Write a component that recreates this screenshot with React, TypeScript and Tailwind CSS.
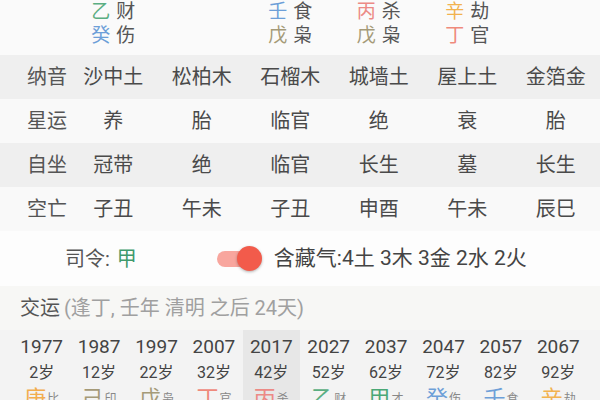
import React from 'react'

const FONT = "font-['Roboto','Noto_Sans_CJK_SC',sans-serif]"

const stemColor: Record<string, string> = {
  甲: 'text-[#4aa876]',
  乙: 'text-[#5aae82]',
  丙: 'text-[#ec8a86]',
  丁: 'text-[#ef8a7c]',
  戊: 'text-[#a59a78]',
  己: 'text-[#a59a78]',
  庚: 'text-[#f2ad4e]',
  辛: 'text-[#f2b24e]',
  壬: 'text-[#6d9fd8]',
  癸: 'text-[#6d9fd8]',
}

type Pair = [string, string] | null

const hiddenRow1: Pair[] = [['乙', '财'], null, ['壬', '食'], ['丙', '杀'], ['辛', '劫'], null]
const hiddenRow2: Pair[] = [['癸', '伤'], null, ['戊', '枭'], ['戊', '枭'], ['丁', '官'], null]

const rows = [
  { label: '纳音', cells: ['沙中土', '松柏木', '石榴木', '城墙土', '屋上土', '金箔金'], bg: 'bg-[#efefef]' },
  { label: '星运', cells: ['养', '胎', '临官', '绝', '衰', '胎'], bg: 'bg-[#f9f9f9]' },
  { label: '自坐', cells: ['冠带', '绝', '临官', '长生', '墓', '长生'], bg: 'bg-[#efefef]' },
  { label: '空亡', cells: ['子丑', '午未', '子丑', '申酉', '午未', '辰巳'], bg: 'bg-[#f9f9f9]' },
]

const luck = [
  { year: 1977, age: 2, stem: '庚', god: '比' },
  { year: 1987, age: 12, stem: '己', god: '印' },
  { year: 1997, age: 22, stem: '戊', god: '枭' },
  { year: 2007, age: 32, stem: '丁', god: '官' },
  { year: 2017, age: 42, stem: '丙', god: '杀' },
  { year: 2027, age: 52, stem: '乙', god: '财' },
  { year: 2037, age: 62, stem: '甲', god: '才' },
  { year: 2047, age: 72, stem: '癸', god: '伤' },
  { year: 2057, age: 82, stem: '壬', god: '食' },
  { year: 2067, age: 92, stem: '辛', god: '劫' },
]

function HiddenRow({ items }: { items: Pair[] }) {
  return (
    <div className="grid grid-cols-[69px_repeat(6,1fr)] h-[24px] items-center">
      <div />
      {items.map((p, i) => (
        <div key={i} className="flex justify-center gap-[6px] text-[19px] leading-[24px]">
          {p && (
            <>
              <span className={stemColor[p[0]]}>{p[0]}</span>
              <span className="text-[#555]">{p[1]}</span>
            </>
          )}
        </div>
      ))}
    </div>
  )
}

export default function App() {
  return (
    <div className={`w-[600px] h-[400px] overflow-hidden bg-[#fafafa] text-[#4a4a4a] ${FONT}`}>
      {/* hidden stems */}
      <div className="h-[55px] bg-[#fafafa]">
        <HiddenRow items={hiddenRow1} />
        <HiddenRow items={hiddenRow2} />
      </div>

      {/* table */}
      {rows.map(r => (
        <div key={r.label} className={`grid grid-cols-[69px_repeat(6,1fr)] h-[44px] items-center text-[20px] ${r.bg}`}>
          <div className="pl-[27px] whitespace-nowrap text-[#555]">{r.label}</div>
          {r.cells.map((c, i) => (
            <div key={i} className="text-center">{c}</div>
          ))}
        </div>
      ))}

      {/* 司令 / 含藏气 */}
      <div className="h-[55px] bg-[#fdfdfd] flex items-center pl-[65px] text-[20px]">
        <span className="text-[#555]">司令:</span>
        <span className="ml-[7px] text-[#3f9a6c]">甲</span>
        <div className="ml-[80px] flex items-center">
          <div className="w-[38px] h-[16px] rounded-full bg-[#f8a69e]" />
          <div className="-ml-[18px] w-[25px] h-[25px] rounded-full bg-[#f25b4b] shadow-[0_1px_3px_rgba(0,0,0,0.3)]" />
        </div>
        <span className="ml-[12px] text-[21px] text-[#444]">含藏气:4土 3木 3金 2水 2火</span>
      </div>

      {/* 交运 */}
      <div className="h-[44px] bg-[#f7f7f5] flex items-center pl-[20px] text-[20px]">
        <span className="text-[#555]">交运</span>
        <span className="ml-[4px] text-[#a0a0a0]">(逢丁, 壬年 清明 之后 24天)</span>
      </div>

      <div className="grid grid-cols-10 px-[13px] bg-[#f3f3f3]">
        {luck.map(l => (
          <div
            key={l.year}
            className={`flex flex-col items-center pt-[4px] ${l.year === 2017 ? 'bg-[#e7e7e7]' : ''}`}
          >
            <div className="text-[19px] leading-[26px] text-[#444]">{l.year}</div>
            <div className="text-[16px] leading-[26px] text-[#444]">{l.age}岁</div>
            <div className="flex items-end gap-[1px] leading-[26px]">
              <span className={`text-[22px] ${stemColor[l.stem]}`}>{l.stem}</span>
              <span className="text-[12px] text-[#888]">{l.god}</span>
            </div>
          </div>
        ))}
      </div>
    </div>
  )
}
